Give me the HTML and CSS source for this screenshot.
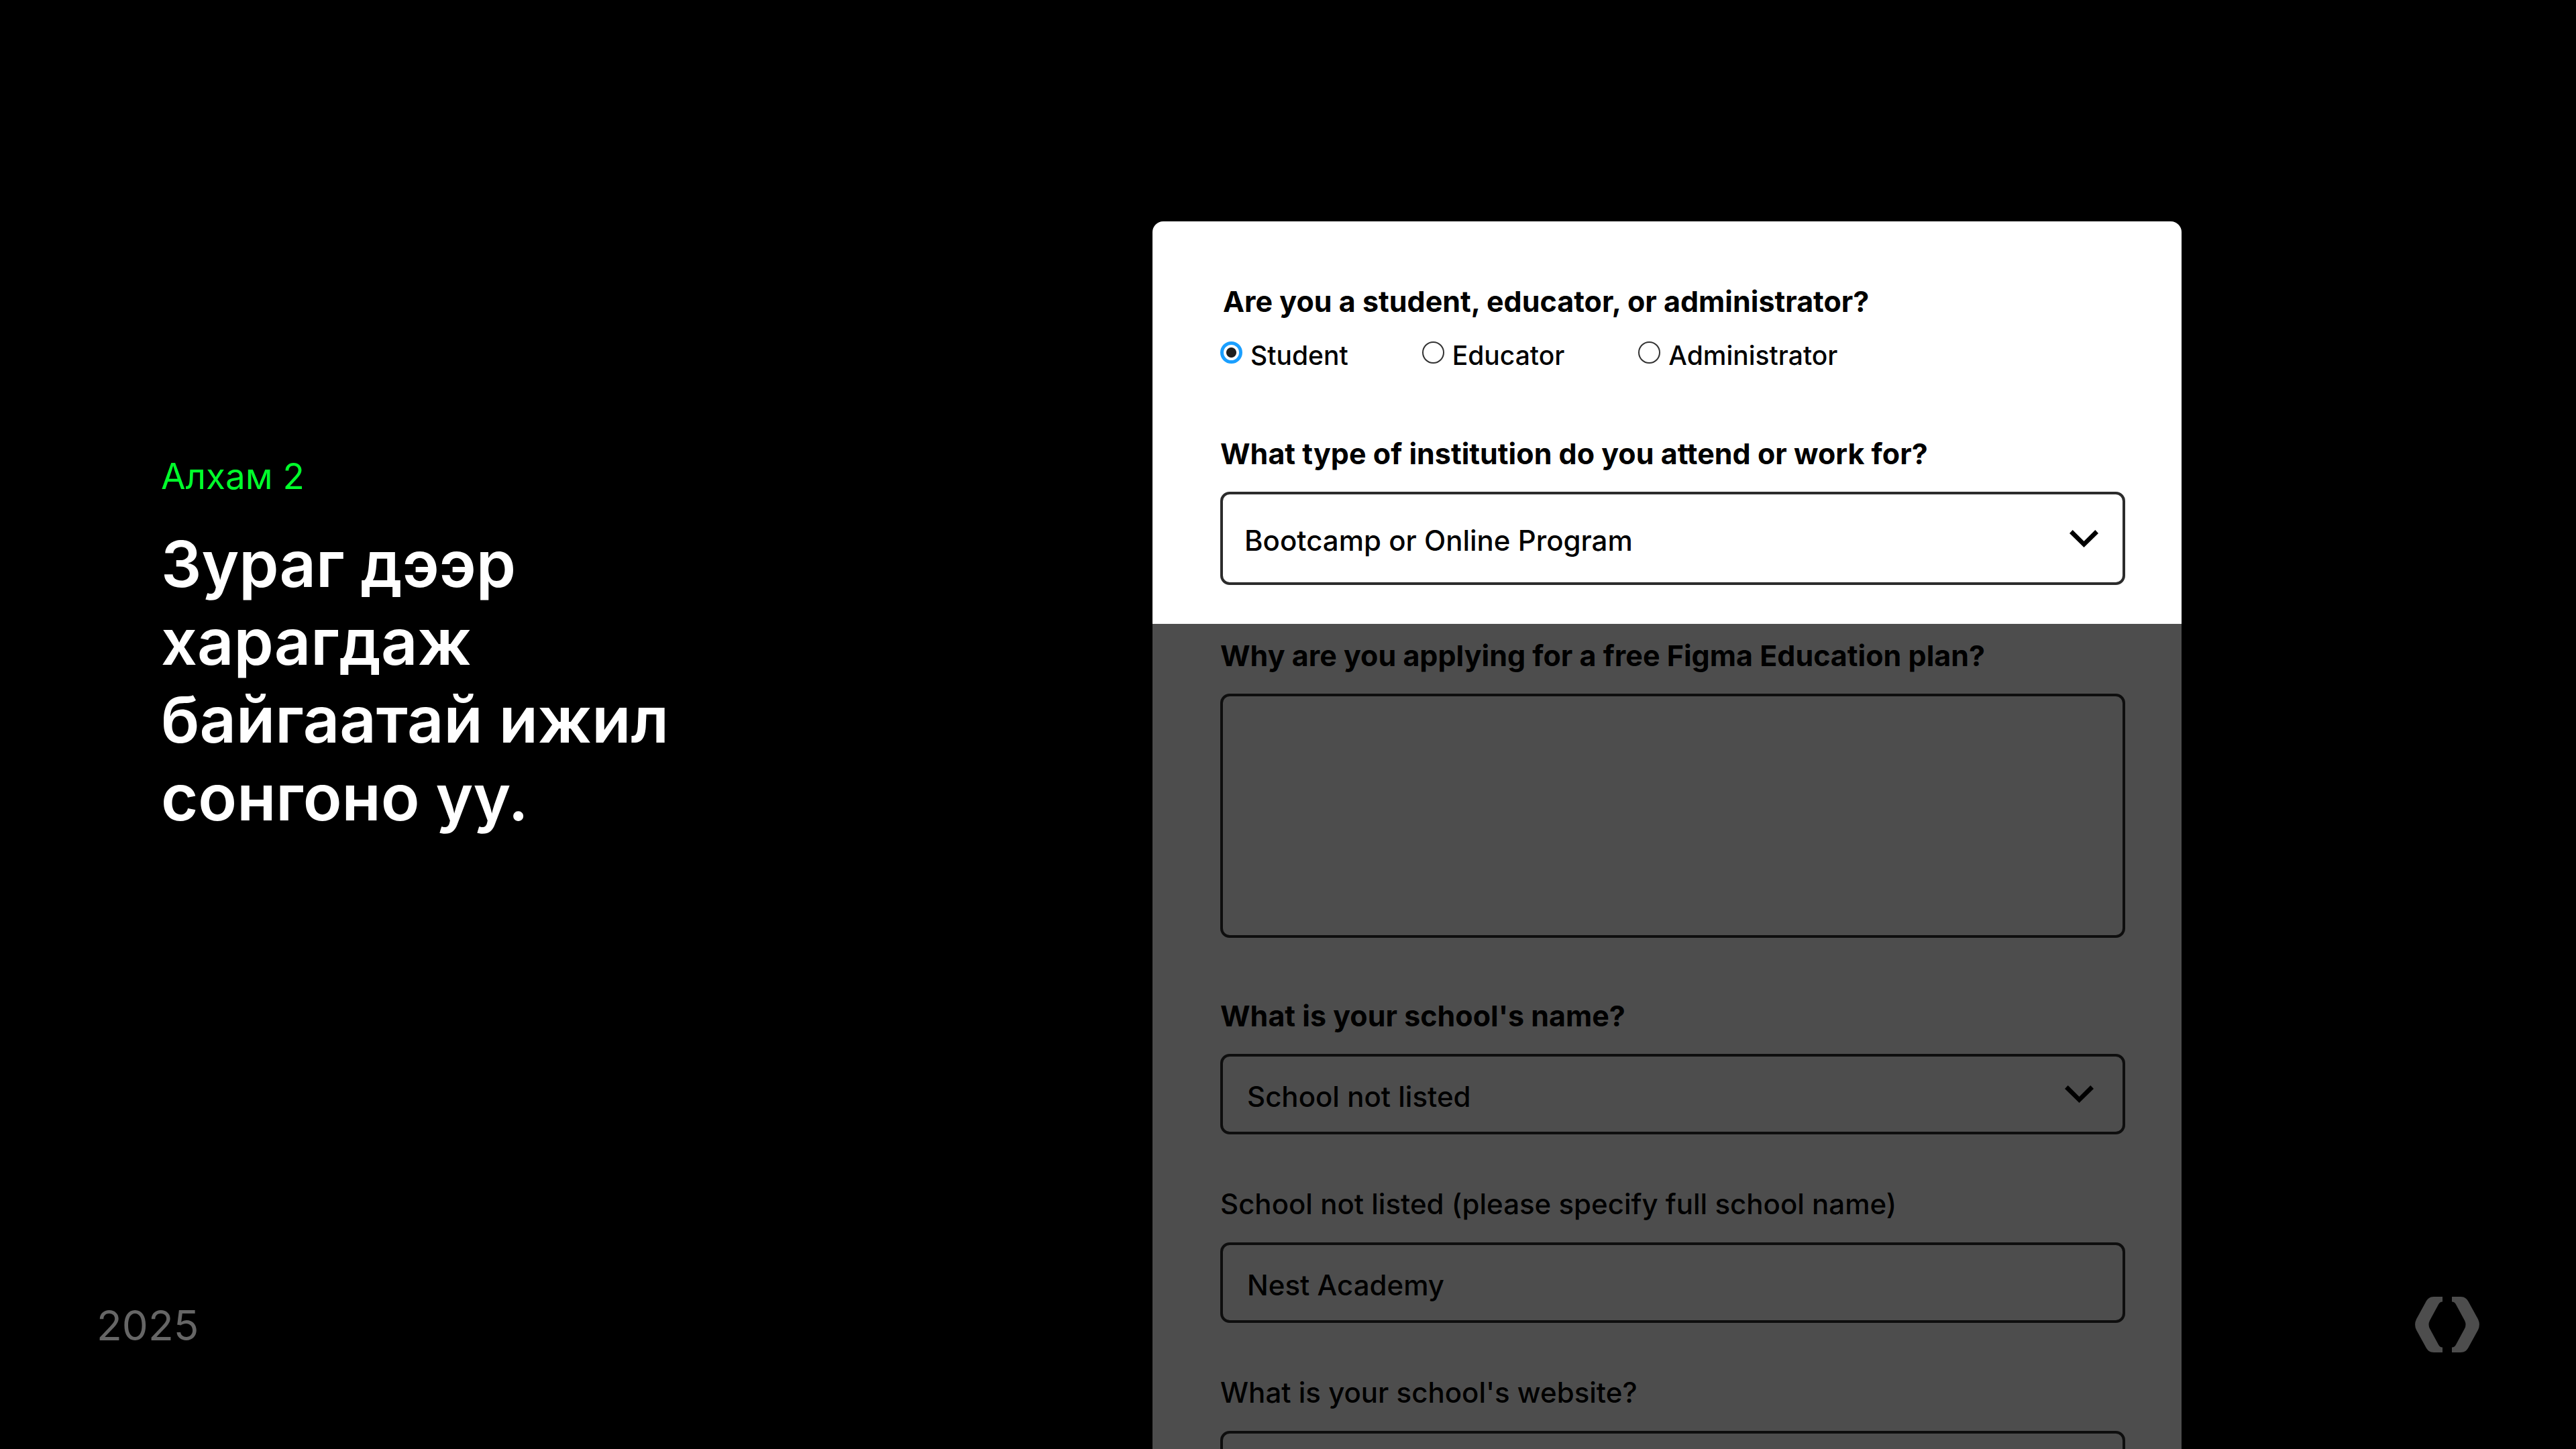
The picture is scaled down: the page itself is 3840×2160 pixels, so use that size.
FILE: index.html
```html
<!DOCTYPE html>
<html lang="mn">
<head>
<meta charset="utf-8">
<meta name="viewport" content="width=device-width, initial-scale=1">
<title>Алхам 2</title>
<link rel="stylesheet" href="styles.css">
</head>
<body>
<main class="slide">
  <section class="intro">
    <div class="intro-copy">
      <p class="eyebrow">Алхам 2</p>
      <h1 class="title">Зураг дээр харагдаж байгаатай ижил сонгоно уу.</h1>
    </div>
    <p class="year">2025</p>
  </section>

  <form class="card" lang="en">
    <div class="part part-active">
      <fieldset class="choice">
        <legend class="label label-bold">Are you a student, educator, or administrator?</legend>
        <div class="options">
          <label class="option"><input class="radio" type="radio" name="role" checked><span>Student</span></label>
          <label class="option"><input class="radio" type="radio" name="role"><span>Educator</span></label>
          <label class="option"><input class="radio" type="radio" name="role"><span>Administrator</span></label>
        </div>
      </fieldset>
      <div class="field field-institution">
        <label class="label label-bold" for="institution">What type of institution do you attend or work for?</label>
        <div class="picker">
          <select class="control control-tall" id="institution"><option>Bootcamp or Online Program</option></select>
          <svg class="chevron" viewBox="0 0 43 26" aria-hidden="true"><path d="M0 5 4.7 0 21.5 16.7 38.3 0 43 5 21.5 26Z"/></svg>
        </div>
      </div>
    </div>

    <div class="part part-dimmed">
      <div class="field">
        <label class="label label-bold" for="reason">Why are you applying for a free Figma Education plan?</label>
        <textarea class="control control-area" id="reason"></textarea>
      </div>
      <div class="field field-school">
        <label class="label label-bold" for="school">What is your school's name?</label>
        <div class="picker">
          <select class="control" id="school"><option>School not listed</option></select>
          <svg class="chevron chevron-inset" viewBox="0 0 43 26" aria-hidden="true"><path d="M0 5 4.7 0 21.5 16.7 38.3 0 43 5 21.5 26Z"/></svg>
        </div>
      </div>
      <div class="field field-text">
        <label class="label" for="school-name">School not listed (please specify full school name)</label>
        <input class="control" id="school-name" type="text" value="Nest Academy">
      </div>
      <div class="field field-text">
        <label class="label" for="website">What is your school's website?</label>
        <input class="control" id="website" type="text">
      </div>
    </div>
  </form>

  <div class="brand">
    <svg class="logo" viewBox="0 0 96 83" role="img" aria-label="Logo">
      <path id="half" d="M41 0H28C22 0 18.500 3 16 8L2 33.500Q-1.800 41.500 2 49.500L16 75C18.500 80 22 83 28 83H41V75.500Q37 75.500 35 71.500L22 47.500Q19 41.500 22 35.500L35 11.500Q37 7.500 41 7.500Z"/>
      <use href="#half" transform="matrix(-1 0 0 1 96 0)"/>
    </svg>
  </div>
</main>
</body>
</html>
```
FILE: styles.css
```css
* {
  box-sizing: border-box;
}

body {
  margin: 0;
  background: #000;
  color: #fff;
  font-family: Inter, "Liberation Sans", sans-serif;
}

.slide {
  display: grid;
  grid-template-columns: 1718fr 1534fr 588fr;
  grid-template-rows: 100%;
  height: 100vh;
  overflow: hidden;
}

.intro {
  display: flex;
  flex-direction: column;
  justify-content: space-between;
  padding: 678px 0 152px 144px;
}

.intro-copy {
  padding-left: 96px;
}

.eyebrow {
  margin: 0 0 41px;
  color: #00ff2b;
  font-size: 53px;
  line-height: 64px;
}

.title {
  max-width: 800px;
  margin: 0;
  font-size: 95px;
  font-weight: 600;
  line-height: 116px;
}

.year {
  margin: 0;
  color: #666;
  font-size: 62px;
  line-height: 64px;
}

.card {
  margin-top: 330px;
  color: #000;
}

.part {
  padding: 0 84px 58px 101px;
}

.part-active {
  padding-top: 93px;
  border-radius: 16px 16px 0 0;
  background: #fff;
}

.part-dimmed {
  padding-top: 21px;
  background: #4d4d4d;
}

.choice {
  min-width: 0;
  margin: 0;
  padding: 0;
  border: 0;
}

.label {
  display: block;
  margin-bottom: 31px;
  padding: 0;
  font-size: 42px;
  font-weight: 500;
  line-height: 52px;
}

.label-bold {
  font-size: 43px;
  font-weight: 700;
}

.choice .label {
  padding-left: 4px;
}

.options {
  display: flex;
  gap: 110px;
}

.option {
  display: flex;
  align-items: flex-start;
  gap: 12px;
  font-size: 39px;
  font-weight: 500;
  line-height: 48px;
}

.radio {
  appearance: none;
  width: 33px;
  height: 33px;
  margin: 3px 0 0;
  border: 2px solid #333;
  border-radius: 50%;
  background: #fff;
}

.radio:checked {
  border: 5px solid #1a9fff;
  background: radial-gradient(circle, #1e1e1e 7px, #fff 8px);
}

.field {
  display: flex;
  flex-direction: column;
}

.field-institution {
  margin-top: 96px;
}

.field-school {
  margin-top: 90px;
}

.field-text {
  margin-top: 78px;
}

.control {
  appearance: none;
  width: 100%;
  height: 120px;
  margin: 0;
  padding: 6px 36px 0;
  border: 4px solid #0e0e0e;
  border-radius: 14px;
  outline: 0;
  background: transparent;
  color: #000;
  font-family: inherit;
  font-size: 42px;
  font-weight: 500;
}

.control-tall {
  height: 139px;
  padding-left: 32px;
  border-color: #2c2c2c;
}

.control-area {
  height: 364px;
  resize: none;
}

.picker {
  display: grid;
  align-items: center;
}

.picker > * {
  grid-area: 1 / 1;
}

.chevron {
  justify-self: end;
  width: 43px;
  height: 26px;
  margin-right: 40px;
  pointer-events: none;
}

.chevron-inset {
  margin-right: 47px;
}

.brand {
  display: flex;
  align-items: flex-end;
  justify-content: flex-end;
  padding: 0 144px 144px;
}

.logo {
  width: 96px;
  height: 83px;
  fill: #4d4d4d;
}
```
